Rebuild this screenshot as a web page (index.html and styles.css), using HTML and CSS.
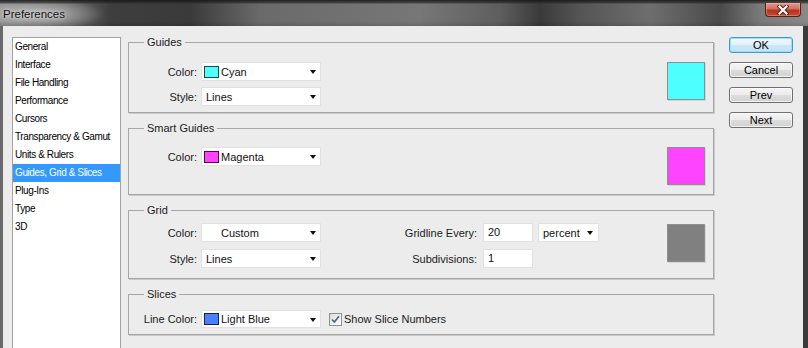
FILE: index.html
```html
<!DOCTYPE html>
<html>
<head>
<meta charset="utf-8">
<title>Preferences</title>
<link rel="stylesheet" href="styles.css">
</head>
<body>
<div class="window">
  <div class="titlebar">
    <span class="title">Preferences</span>
    <button class="close" aria-label="Close">
      <svg width="12" height="10" viewBox="0 0 12 10">
        <path d="M2.5 1.5 L9.5 8.5 M9.5 1.5 L2.5 8.5" stroke="#5a1a10" stroke-width="4" stroke-linecap="square"/>
        <path d="M2.5 1.5 L9.5 8.5 M9.5 1.5 L2.5 8.5" stroke="#ffffff" stroke-width="2.2" stroke-linecap="square"/>
      </svg>
    </button>
  </div>
  <div class="body">
    <ul class="nav">
      <li>General</li>
      <li>Interface</li>
      <li>File Handling</li>
      <li>Performance</li>
      <li>Cursors</li>
      <li>Transparency &amp; Gamut</li>
      <li>Units &amp; Rulers</li>
      <li class="selected">Guides, Grid &amp; Slices</li>
      <li>Plug-Ins</li>
      <li>Type</li>
      <li>3D</li>
    </ul>

    <div class="panels">
      <fieldset class="group group-guides">
        <legend>Guides</legend>
        <div class="form">
          <label>Color:</label>
          <div class="select"><span class="chip chip-cyan"></span><span class="val">Cyan</span><span class="arrow"></span></div>
          <label>Style:</label>
          <div class="select"><span class="val plain">Lines</span><span class="arrow"></span></div>
        </div>
        <div class="swatch swatch-cyan"></div>
      </fieldset>

      <fieldset class="group group-smart">
        <legend>Smart Guides</legend>
        <div class="form">
          <label>Color:</label>
          <div class="select"><span class="chip chip-magenta"></span><span class="val">Magenta</span><span class="arrow"></span></div>
        </div>
        <div class="swatch swatch-magenta"></div>
      </fieldset>

      <fieldset class="group group-grid">
        <legend>Grid</legend>
        <div class="form form-loose">
          <label>Color:</label>
          <div class="select"><span class="chip chip-none"></span><span class="val">Custom</span><span class="arrow"></span></div>
          <label>Style:</label>
          <div class="select"><span class="val plain">Lines</span><span class="arrow"></span></div>
        </div>
        <div class="form2">
          <label>Gridline Every:</label>
          <div class="input">20</div>
          <div class="select select-small"><span class="val">percent</span><span class="arrow"></span></div>
          <label>Subdivisions:</label>
          <div class="input">1</div>
        </div>
        <div class="swatch swatch-gray"></div>
      </fieldset>

      <fieldset class="group group-slices">
        <legend>Slices</legend>
        <div class="form">
          <label>Line Color:</label>
          <div class="select select-short"><span class="chip chip-blue"></span><span class="val">Light Blue</span><span class="arrow"></span></div>
        </div>
        <div class="check">
          <svg width="13" height="13" viewBox="0 0 13 13">
            <defs>
              <linearGradient id="cb" x1="0" y1="0" x2="1" y2="1">
                <stop offset="0" stop-color="#dcdcdc"/>
                <stop offset="1" stop-color="#ffffff"/>
              </linearGradient>
            </defs>
            <rect x="0.5" y="0.5" width="12" height="12" fill="url(#cb)" stroke="#8f8f8f"/>
            <path d="M3 6.5 L5.4 9 L10 3.3" fill="none" stroke="#4b5f8e" stroke-width="1.6"/>
          </svg>
          <span>Show Slice Numbers</span>
        </div>
      </fieldset>
    </div>

    <div class="buttons">
      <button class="btn btn-default">OK</button>
      <button class="btn">Cancel</button>
      <button class="btn">Prev</button>
      <button class="btn">Next</button>
    </div>
  </div>
</div>
</body>
</html>
```

FILE: styles.css
```css
* { box-sizing: border-box; }
html, body { margin: 0; padding: 0; }
body {
  width: 808px;
  height: 348px;
  overflow: hidden;
  font-family: "Liberation Sans", Arial, sans-serif;
  font-size: 11px;
  color: #1b1b1b;
  background: #4a4a4a;
}
.window {
  width: 808px;
  height: 348px;
  display: flex;
  flex-direction: column;
  background: linear-gradient(90deg, #6a6a6a 0%, #5a5a5a 50%, #3a3a3a 100%);
}
.titlebar {
  height: 26px;
  flex: none;
  display: flex;
  justify-content: space-between;
  align-items: flex-start;
  padding: 0 7px 0 3px;
  background:
    linear-gradient(180deg, rgba(20,20,20,0.85) 0px, rgba(40,40,40,0.6) 3px, rgba(0,0,0,0) 4px, rgba(0,0,0,0) 21px, rgba(0,0,0,0.12) 26px),
    radial-gradient(ellipse 70px 16px at 35px 14px, rgba(190,190,190,0.95), rgba(160,160,160,0) 100%),
    linear-gradient(90deg, #8a8a8a 0px, #6a6a6a 70px, #3e3e3e 110px, #3a3a3a 190px, #6a6a6a 260px, #777 420px, #5e5e5e 500px, #3a3a3a 540px, #555 580px, #6e6e6e 650px, #4a4a4a 720px, #7a7a7a 760px, #8a8a8a 808px);
}
.title {
  margin-top: 7px;
  font-size: 11.5px;
  line-height: 14px;
  color: #111;
  text-shadow: 0 0 6px #d8d8d8, 0 0 3px #e0e0e0;
}
.close {
  margin: 3px 0 0 0;
  width: 36px;
  height: 14px;
  padding: 0;
  border: 1px solid #5a1e14;
  border-top: none;
  border-radius: 0 0 4px 4px;
  background: linear-gradient(180deg, #e29a8e 0%, #d0705f 45%, #b8321c 55%, #c64a30 100%);
  box-shadow: inset 0 0 0 1px rgba(255,200,190,0.35);
  display: flex;
  align-items: center;
  justify-content: center;
}
.body {
  flex: 1;
  margin: 0 5px 0 3px;
  background: #ececec;
  display: flex;
  align-items: flex-start;
  padding: 9px 0 0 9px;
  overflow: hidden;
}
.nav {
  list-style: none;
  margin: 2px 0 0 0;
  padding: 0;
  width: 109px;
  height: 330px;
  flex: none;
  background: #fff;
  border: 1px solid #a3a3a3;
  font-size: 10px;
  letter-spacing: -0.4px;
  color: #000;
}
.nav li {
  height: 18px;
  line-height: 18px;
  padding-left: 2px;
  white-space: nowrap;
}
.nav li.selected {
  background: #3399ff;
  color: #fff;
}
.panels {
  flex: none;
  width: 586px;
  margin-left: 7px;
  display: flex;
  flex-direction: column;
  gap: 8px;
}
.group {
  margin: 0;
  min-width: 0;
  border: 1px solid #a6a6a6;
  box-shadow: 1px 1px 0 #c9c9c9;
  padding: 0 8px 0 0;
  display: flex;
  align-items: flex-start;
}
.group legend {
  margin-left: 15px;
  padding: 0 3px;
  font-size: 11px;
  line-height: 14px;
  color: #1b1b1b;
}
.group-guides { padding-top: 13px; padding-bottom: 6px; }
.group-smart { padding-top: 12px; padding-bottom: 9px; }
.group-grid { padding-top: 6px; padding-bottom: 10px; }
.group-slices { padding-top: 9px; padding-bottom: 6px; align-items: center; }
.group-slices + .group { margin-top: 0; }

.form {
  display: grid;
  grid-template-columns: 68px 120px;
  column-gap: 4px;
  row-gap: 6px;
  align-items: center;
}
.form-loose { row-gap: 7px; }
.form label, .form2 label {
  text-align: right;
  white-space: nowrap;
}
.select {
  height: 19px;
  background: #fff;
  border: 1px solid #e1e1e1;
  display: flex;
  align-items: center;
  padding: 0 4px 0 1px;
  position: relative;
}
.group-slices .select { height: 18px; }
.val { flex: 1; white-space: nowrap; color: #111; }
.val.plain { padding-left: 3px; }
.chip {
  width: 15px;
  height: 12px;
  margin: 0 2px 0 1px;
  border: 1px solid #222;
  flex: none;
}
.chip-cyan { background: #4dffff; border-color: #1f4848; }
.chip-magenta { background: #ff44ff; border-color: #4a1040; }
.chip-blue { background: #4a7fff; border-color: #14224a; }
.chip-none { border: none; background: transparent; }
.arrow {
  width: 0;
  height: 0;
  border-left: 3.5px solid transparent;
  border-right: 3.5px solid transparent;
  border-top: 4px solid #111;
  margin-top: 1px;
  flex: none;
}
.select-small {
  width: 61px;
  padding-left: 4px;
  padding-right: 5px;
  margin-left: 5px;
}
.select-small .arrow {
  border-left-width: 3px;
  border-right-width: 3px;
  border-top-width: 4px;
}
.form2 {
  display: grid;
  grid-template-columns: 148px 50px 66px;
  column-gap: 6px;
  row-gap: 7px;
  align-items: center;
  margin-left: 8px;
}
.form2 .select-small { margin-left: -1px; }
.input {
  height: 19px;
  background: #fff;
  border: 1px solid #e1e1e1;
  padding-left: 4px;
  line-height: 17px;
  color: #111;
}
.swatch {
  margin-left: auto;
  width: 38px;
  height: 38px;
  border: 1px solid #8f8f8f;
  box-shadow: 1px 1px 0 #d4d4d4;
  flex: none;
}
.swatch-cyan { background: #4dffff; }
.swatch-magenta { background: #ff44ff; }
.swatch-gray { background: #808080; margin-top: 1px; }
.check {
  display: flex;
  align-items: center;
  gap: 2px;
  margin-left: 8px;
}
.check svg { display: block; }
.buttons {
  flex: none;
  width: 64px;
  margin-left: 15px;
  margin-top: 2px;
  display: flex;
  flex-direction: column;
  gap: 9px;
}
.btn {
  height: 16px;
  width: 64px;
  padding: 0;
  font-family: "Liberation Sans", Arial, sans-serif;
  font-size: 11px;
  line-height: 14px;
  color: #000;
  border: 1px solid #707070;
  border-radius: 3px;
  background: linear-gradient(180deg, #f4f4f4 0%, #ececec 48%, #dcdcdc 52%, #d2d2d2 100%);
  box-shadow: inset 0 0 0 1px rgba(255,255,255,0.7);
}
.btn-default {
  border-color: #3c9ad8;
  background: linear-gradient(180deg, #f0f8fd 0%, #e3f1fb 48%, #cde7f8 52%, #c3e1f6 100%);
  box-shadow: inset 0 0 0 1px #9fdcf6;
}
```
